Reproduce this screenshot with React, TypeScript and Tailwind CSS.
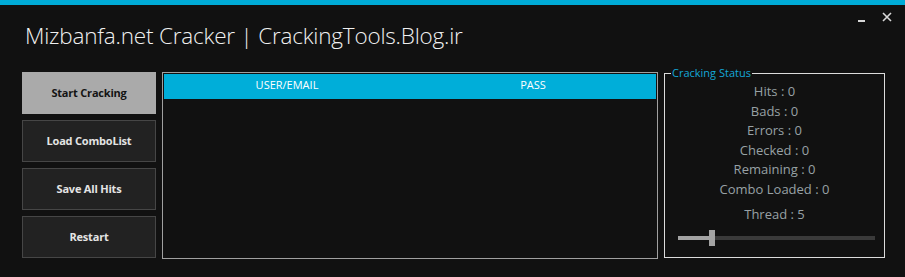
import React from 'react';

const buttons = ['Start Cracking', 'Load ComboList', 'Save All Hits', 'Restart'];

const stats = [
  ['Hits', 0],
  ['Bads', 0],
  ['Errors', 0],
  ['Checked', 0],
  ['Remaining', 0],
  ['Combo Loaded', 0],
];

export default function App() {
  return (
    <div className="w-[905px] h-[277px] bg-[#111111] overflow-hidden flex flex-col" style={{ fontFamily: '"Open Sans", "Noto Sans", sans-serif' }}>
      {/* accent bar */}
      <div className="h-[5px] bg-[#00acd8]" />

      {/* title row */}
      <div className="relative h-[67px]">
        <h1 className="pl-[25px] pt-[16px] text-[22.5px] font-light text-[#f0f0f0] tracking-[-0.2px] leading-[30px]">
          Mizbanfa.net Cracker | CrackingTools.Blog.ir
        </h1>
        <div className="absolute right-[13px] top-[5px] flex items-center gap-[17px] text-[#d8d8d8]">
          <div className="w-[7px] h-[2px] bg-[#d8d8d8] mt-[10px]" />
          <svg width="10" height="10" viewBox="0 0 10 10" className="mt-[1px]">
            <path d="M1 1 L9 9 M9 1 L1 9" stroke="#d8d8d8" strokeWidth="1.6" />
          </svg>
        </div>
      </div>

      {/* main row */}
      <div className="flex pl-[22px] gap-[6px] items-start">
        <div className="w-[134px] flex flex-col gap-[6px]">
          {buttons.map((b, i) => (
            <button
              key={b}
              className={`h-[42px] w-full text-[11px] font-bold tracking-[-0.2px] border ${
                i === 0
                  ? 'bg-[#aaaaaa] border-[#aaaaaa] text-[#141414]'
                  : 'bg-[#222222] border-[#464646] text-[#e4e4e4]'
              }`}
              style={{ fontFamily: '"Open Sans", "Noto Sans", sans-serif' }}
            >
              {b}
            </button>
          ))}
        </div>

        {/* grid */}
        <div className="w-[496px] h-[187px] border border-[#a0a0a0] p-[1px]">
          <div className="grid grid-cols-2 h-[25px] bg-[#00aed9] text-white text-[11px] leading-[14px] pt-[4px] text-center">
            <div>USER/EMAIL</div>
            <div>PASS</div>
          </div>
        </div>

        {/* status group */}
        <div className="relative mt-[1px] w-[221px] h-[185px] border border-[#dcdcdc]">
          <span className="absolute left-[6px] -top-[9px] px-[1px] bg-[#111111] text-[11px] leading-[16px] text-[#14a7d8]">
            Cracking Status
          </span>
          <div className="flex flex-col items-center pt-[8px] text-[13px] leading-[19.5px] text-[#98a1a5]">
            {stats.map(([label, v]) => (
              <div key={label as string}>
                {label} : {v}
              </div>
            ))}
            <div className="mt-[6px]">Thread : 5</div>
          </div>
          <div className="relative ml-[13px] mr-[9px] mt-[11px] h-[4px] bg-[#3a3a3a]">
            <div className="absolute left-0 top-0 h-[4px] w-[34px] bg-[#a3a3a3]" />
            <div className="absolute left-[31px] -top-[6px] w-[6px] h-[16px] bg-[#a3a3a3]" />
          </div>
        </div>
      </div>
    </div>
  );
}
